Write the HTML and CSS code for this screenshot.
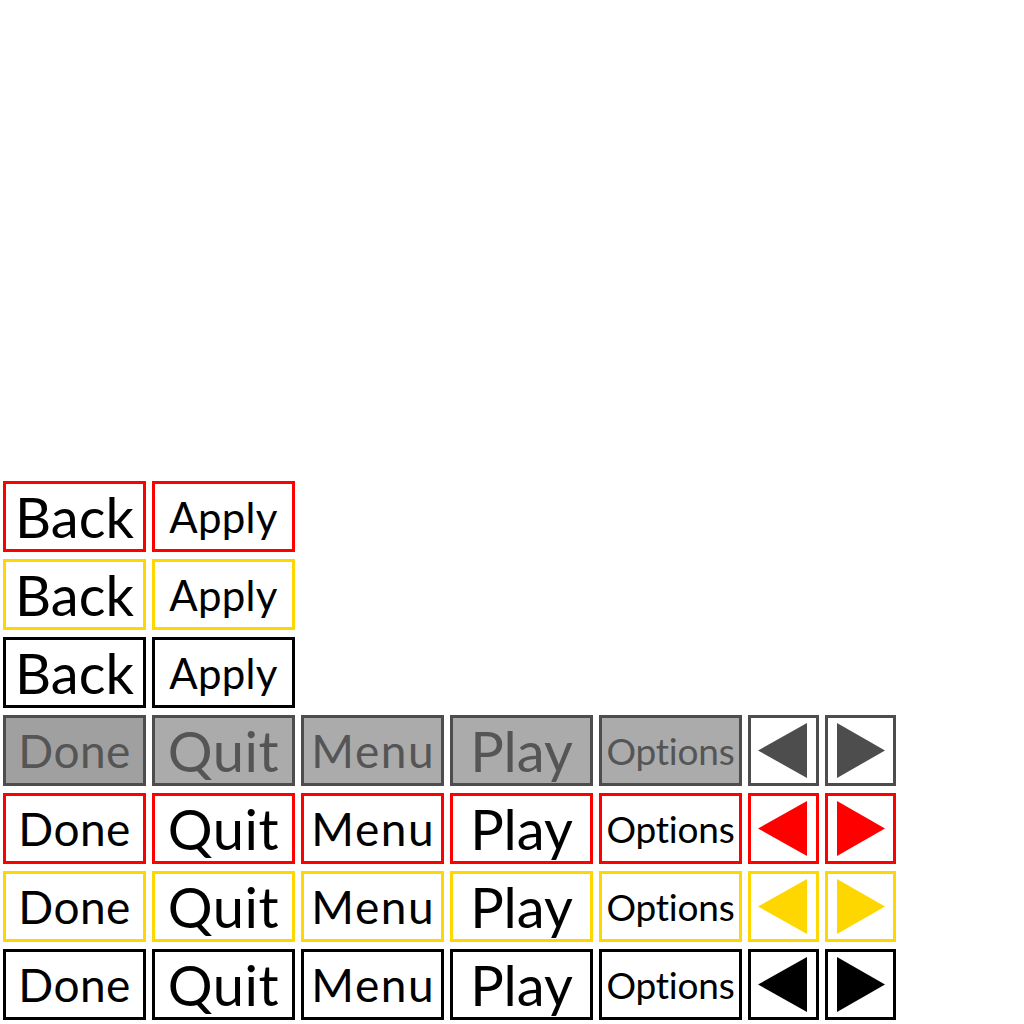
FILE: index.html
```html
<!DOCTYPE html>
<html lang="en">
<head>
<meta charset="utf-8">
<title>Buttons</title>
<link rel="stylesheet" href="styles.css">
</head>
<body>
<div class="page">
  <div class="grid">
    <div class="btn red back">Back</div>
    <div class="btn red apply">Apply</div>
    <div class="row-fill"></div>

    <div class="btn yellow back">Back</div>
    <div class="btn yellow apply">Apply</div>
    <div class="row-fill"></div>

    <div class="btn black back">Back</div>
    <div class="btn black apply">Apply</div>
    <div class="row-fill"></div>

    <div class="btn gray dark done">Done</div>
    <div class="btn gray quit">Quit</div>
    <div class="btn gray menu">Menu</div>
    <div class="btn gray play">Play</div>
    <div class="btn gray options">Options</div>
    <div class="btn gray-arrow arrow"><svg viewBox="0 0 65 65"><polygon points="7,32.5 56,5 56,60"/></svg></div>
    <div class="btn gray-arrow arrow"><svg viewBox="0 0 65 65"><polygon points="9,5 57,32.5 9,60"/></svg></div>

    <div class="btn red done">Done</div>
    <div class="btn red quit">Quit</div>
    <div class="btn red menu">Menu</div>
    <div class="btn red play">Play</div>
    <div class="btn red options">Options</div>
    <div class="btn red arrow"><svg viewBox="0 0 65 65"><polygon points="7,32.5 56,5 56,60"/></svg></div>
    <div class="btn red arrow"><svg viewBox="0 0 65 65"><polygon points="9,5 57,32.5 9,60"/></svg></div>

    <div class="btn yellow done">Done</div>
    <div class="btn yellow quit">Quit</div>
    <div class="btn yellow menu">Menu</div>
    <div class="btn yellow play">Play</div>
    <div class="btn yellow options">Options</div>
    <div class="btn yellow arrow"><svg viewBox="0 0 65 65"><polygon points="7,32.5 56,5 56,60"/></svg></div>
    <div class="btn yellow arrow"><svg viewBox="0 0 65 65"><polygon points="9,5 57,32.5 9,60"/></svg></div>

    <div class="btn black done">Done</div>
    <div class="btn black quit">Quit</div>
    <div class="btn black menu">Menu</div>
    <div class="btn black play">Play</div>
    <div class="btn black options">Options</div>
    <div class="btn black arrow"><svg viewBox="0 0 65 65"><polygon points="7,32.5 56,5 56,60"/></svg></div>
    <div class="btn black arrow"><svg viewBox="0 0 65 65"><polygon points="9,5 57,32.5 9,60"/></svg></div>
  </div>
</div>
</body>
</html>
```
FILE: styles.css
```css
html, body {
  margin: 0;
  padding: 0;
  background: #ffffff;
}

.page {
  height: 1024px;
  box-sizing: border-box;
  display: flex;
  flex-direction: column;
  justify-content: flex-end;
  padding: 0 0 4px 3px;
  font-family: Lato, "Liberation Sans", sans-serif;
}

.grid {
  display: grid;
  grid-template-columns: repeat(5, 143px) 71px 71px;
  grid-auto-rows: 71px;
  column-gap: 6px;
  row-gap: 7px;
}

.row-fill {
  grid-column: 3 / 8;
}

.btn {
  box-sizing: border-box;
  border: 3px solid #000;
  background: #fff;
  color: #000;
  display: flex;
  align-items: center;
  justify-content: center;
  line-height: 1;
  white-space: nowrap;
  overflow: hidden;
}

.red { border-color: #ff0000; }
.yellow { border-color: #ffd700; }
.black { border-color: #000000; }

.gray {
  border-color: #4d4d4d;
  background: #ababab;
  color: #555555;
}
.gray.dark { background: #a0a0a0; }

.gray-arrow { border-color: #4d4d4d; }

.back { font-size: 56px; }
.apply { font-size: 42px; letter-spacing: 0.3px; }
.done { font-size: 46px; letter-spacing: 0.4px; }
.quit { font-size: 56px; letter-spacing: 0.6px; }
.menu { font-size: 46px; letter-spacing: 1.6px; text-indent: 1.6px; }
.play { font-size: 56px; }
.options { font-size: 37px; letter-spacing: -0.2px; }

.arrow svg {
  display: block;
  width: 65px;
  height: 65px;
}
.red svg polygon { fill: #ff0000; }
.yellow svg polygon { fill: #ffd700; }
.black svg polygon { fill: #000000; }
.gray-arrow svg polygon { fill: #4d4d4d; }
```
